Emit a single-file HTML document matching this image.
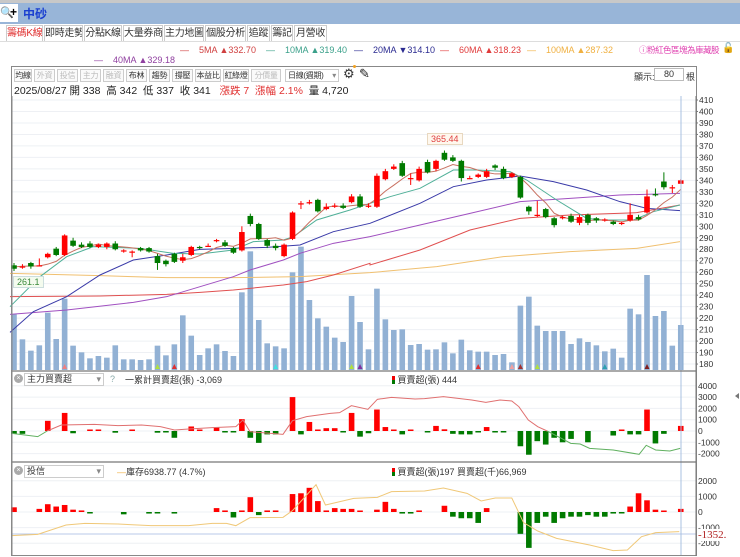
<!DOCTYPE html>
<html><head><meta charset="utf-8">
<style>
*{margin:0;padding:0;box-sizing:border-box}
body{width:740px;height:557px;overflow:hidden;background:#fff;font-family:"Liberation Sans","Noto Sans CJK TC",sans-serif;position:relative;font-size:11px;color:#333}
.abs{position:absolute;white-space:nowrap}
.tab{position:absolute;top:25px;height:16px;border:1px solid #ccc;border-bottom:none;font-size:10px;line-height:15px;text-align:center;color:#333;background:#fff;white-space:nowrap;overflow:hidden;letter-spacing:-0.3px}
.btn{position:absolute;top:69px;height:13px;border:1px solid #ccc;font-size:8px;line-height:11px;text-align:center;color:#333;background:#fafafa;white-space:nowrap;overflow:hidden;letter-spacing:-0.3px}
.btn.d{color:#bbb}
</style></head><body>
<div class="abs" style="left:0;top:0;width:740px;height:3px;background:#c8c8c8"></div>
<div class="abs" style="left:0;top:3px;width:740px;height:21px;background:#98b5d8"></div>
<div class="abs" style="left:0;top:4px;width:18px;height:18px;background:#fff;font-size:11px;line-height:18px">&#x1F50D;</div>
<div class="abs" style="left:10px;top:5px;font-size:12px;font-weight:bold;color:#000">+</div>
<div class="abs" style="left:23px;top:5px;font-size:12px;font-weight:bold;color:#1a3fd0">中砂</div>

<div class="tab" style="left:6px;width:37px;color:#e03030">籌碼K線</div>
<div class="tab" style="left:44px;width:39px">即時走勢</div>
<div class="tab" style="left:84px;width:38px">分點K線</div>
<div class="tab" style="left:123px;width:40px">大量券商</div>
<div class="tab" style="left:164px;width:40px">主力地圖</div>
<div class="tab" style="left:205px;width:41px">個股分析</div>
<div class="tab" style="left:247px;width:23px">追蹤</div>
<div class="tab" style="left:271px;width:22px">籌記</div>
<div class="tab" style="left:294px;width:33px">月營收</div>
<div class="abs" style="left:0;top:41px;width:740px;height:1px;background:#ddd"></div>

<div class="abs" style="top:45px;left:180px;font-size:9px;color:#d04040">—&nbsp;&nbsp;&nbsp;&nbsp;5MA ▲332.70</div>
<div class="abs" style="top:45px;left:266px;font-size:9px;color:#3aa08a">—&nbsp;&nbsp;&nbsp;&nbsp;10MA ▲319.40</div>
<div class="abs" style="top:45px;left:354px;font-size:9px;color:#2a2a90">—&nbsp;&nbsp;&nbsp;&nbsp;20MA ▼314.10</div>
<div class="abs" style="top:45px;left:440px;font-size:9px;color:#e03a3a">—&nbsp;&nbsp;&nbsp;&nbsp;60MA ▲318.23</div>
<div class="abs" style="top:45px;left:527px;font-size:9px;color:#f0b040">—&nbsp;&nbsp;&nbsp;&nbsp;100MA ▲287.32</div>
<div class="abs" style="top:44px;left:639px;font-size:8.5px;color:#e040b0;letter-spacing:-0.5px">ⓘ粉紅色區塊為庫藏股</div>
<div class="abs" style="top:43px;left:722px;font-size:10px;color:#000">🔓</div>
<div class="abs" style="top:55px;left:94px;font-size:9px;color:#9040a0">—&nbsp;&nbsp;&nbsp;&nbsp;40MA ▲329.18</div>

<div class="abs" style="left:11px;top:66px;width:686px;height:490px;border:1px solid #888"></div>
<div class="btn" style="left:14px;width:18px">均線</div>
<div class="btn d" style="left:34px;width:21px">外資</div>
<div class="btn d" style="left:57px;width:21px">投信</div>
<div class="btn d" style="left:80px;width:21px">主力</div>
<div class="btn d" style="left:103px;width:21px">融資</div>
<div class="btn" style="left:126px;width:21px">布林</div>
<div class="btn" style="left:149px;width:21px">趨勢</div>
<div class="btn" style="left:172px;width:21px">撐壓</div>
<div class="btn" style="left:195px;width:26px">本益比</div>
<div class="btn" style="left:223px;width:26px">紅綠燈</div>
<div class="btn d" style="left:251px;width:30px">分價量</div>
<div class="btn" style="left:285px;width:54px;text-align:left;padding-left:2px;background:#fff">日線(週期)<span style="float:right;padding-right:2px;color:#888">▾</span></div>
<div class="abs" style="left:343px;top:66px;font-size:13px;color:#333">⚙</div>
<div class="abs" style="left:353px;top:65px;width:3px;height:3px;border-radius:50%;background:#f0a020"></div>
<div class="abs" style="left:359px;top:66px;font-size:13px;color:#222">✎</div>
<div class="abs" style="left:634px;top:70px;font-size:9px;color:#333">顯示:</div>
<div class="abs" style="left:654px;top:68px;width:30px;height:13px;border:1px solid #bbb;font-size:9px;text-align:center;line-height:11px">80</div>
<div class="abs" style="left:686px;top:70px;font-size:9px;color:#333">根</div>
<div class="abs" style="left:14px;top:83px;font-size:10.5px;color:#222">2025/08/27 開 338&nbsp; 高 342&nbsp; 低 337&nbsp; 收 341&nbsp;&nbsp; <span style="color:#e03030">漲跌 7&nbsp; 漲幅 2.1%</span>&nbsp; 量 4,720</div>

<svg class="abs" style="left:0;top:0" width="740" height="557" id="sv">
<g id="grid" stroke="#eef0f4" stroke-width="1"></g>
<g id="vol"></g>
<g id="mas" fill="none"></g>
<g id="cdl"></g>
<g id="p1"></g>
<g id="p2"></g>
<g id="ax" font-size="8.5" fill="#333" font-family="Liberation Sans,sans-serif"></g>
<line x1="681" y1="96" x2="681" y2="555" stroke="#a8c0e0" stroke-width="1"/>
<line x1="696" y1="96" x2="696" y2="556" stroke="#777" stroke-width="1"/>
<line x1="12" y1="371" x2="696" y2="371" stroke="#777" stroke-width="1.2"/>
<line x1="12" y1="462" x2="696" y2="462" stroke="#777" stroke-width="1.2"/>
<line x1="12" y1="96" x2="12" y2="556" stroke="#888"/>
<path d="M735 396 l4 -3 v6z" fill="#777"/>
</svg>

<div class="abs" style="left:13px;top:276px;font-size:9px;color:#3a8a3a;background:#f4fbee;border:1px solid #cdd;padding:0 3px">261.1</div>
<div class="abs" style="left:427px;top:133px;font-size:9px;color:#e04040;background:#fff8ee;border:1px solid #e8d8c0;padding:0 3px">365.44</div>

<div class="abs" style="left:14px;top:374px;width:9px;height:9px;border-radius:50%;background:#aaa;color:#fff;font-size:7px;line-height:9px;text-align:center">×</div>
<div class="abs" style="left:24px;top:373px;width:80px;height:13px;border:1px solid #ccc;font-size:9px;line-height:11px;padding-left:2px">主力買賣超<span style="float:right;padding-right:2px;color:#888">▾</span></div>
<div class="abs" style="left:110px;top:374px;font-size:9px;color:#8aa">?</div>
<div class="abs" style="left:125px;top:373px;font-size:9px;color:#333">一累計買賣超(張) -3,069</div>
<div class="abs" style="left:392px;top:373px;font-size:9px;color:#333"><span style="display:inline-block;width:3px;height:8px;background:linear-gradient(#e00 50%,#070 50%);vertical-align:-1px"></span> 買賣超(張) 444</div>

<div class="abs" style="left:14px;top:466px;width:9px;height:9px;border-radius:50%;background:#aaa;color:#fff;font-size:7px;line-height:9px;text-align:center">×</div>
<div class="abs" style="left:24px;top:465px;width:80px;height:13px;border:1px solid #ccc;font-size:9px;line-height:11px;padding-left:2px">投信<span style="float:right;padding-right:2px;color:#888">▾</span></div>
<div class="abs" style="left:117px;top:465px;font-size:9px;color:#333"><span style="color:#f0b040">—</span>庫存6938.77 (4.7%)</div>
<div class="abs" style="left:392px;top:465px;font-size:9px;color:#333"><span style="display:inline-block;width:3px;height:8px;background:linear-gradient(#e00 50%,#070 50%);vertical-align:-1px"></span> 買賣超(張)197 買賣超(千)66,969</div>
<div class="abs" style="left:698px;top:529px;font-size:11px;color:#b02020;background:#fff;font-family:'Liberation Serif',serif">-1352.</div>

<script>
var NS="http://www.w3.org/2000/svg";
function el(p,t,a){var e=document.createElementNS(NS,t);for(var k in a)e.setAttribute(k,a[k]);document.getElementById(p).appendChild(e);return e;}
function X(i){return 14+8.44*i;}
function PY(p){return 100+(410-p)*1.148;}
for(var p=180;p<=410;p+=10){var y=PY(p);el('grid','line',{x1:12,x2:696,y1:y,y2:y});var t=el('ax','text',{x:699,y:y+3});t.textContent=p;el('ax','line',{x1:696,x2:698,y1:y,y2:y,stroke:'#777'});}
var C=[[266,263,268,261],[265,265,267,263],[268,265,269,263],[266,266,272,265],[273,276,277,272],[280.5,275,282,274],[275,292,293,274],[287.5,283,290,282],[284,282,286,281],[285,282,287,281],[282,284,285,281],[282,285,286,280],[285,280,287,279],[278,279,280,277],[278,278,279,273],[281,279,282,278],[281,278,282,277],[274,268,276,262],[270,267,271,265],[276,269,277,268],[270,273,276,268],[275,282,283,274],[282,281.5,283,280],[283,283,285,282],[288,288,289,286],[286,283,288,282],[281,277,282,276],[279,295,300,278],[309,302,311,300],[302,289,303,288],[288,283,289,281],[283,281,285,279],[274,284,285,273],[289,312,313,288],[320,320,322,315],[321,321,323,319],[323,313,324,312],[315,317,320,314],[318,318,320,316],[318,316,320,315],[321,326,328,320],[326,317,328,316],[318,318,320,316],[317,344,346,316],[341,348,350,340],[350,352,354,349],[355,344,357,343],[342,342,346,336],[340,350,352,339],[356,347,358,346],[350,357,358,348],[364,358,366,357],[360,357,362,356],[357,342,358,339],[342,342,344,341],[343,345,346,342],[343,348,350,342],[353,351,354,349],[350,342,352,341],[343,346,347,342],[343,325,344,324],[317,313,318,310],[309,310,322,308],[315,308,316,307],[307,301,308,299],[308,308,309,306],[309,304,311,303],[303,308,310,301],[310,303,311,301],[307,305,308,303],[306,306,307,304],[304,302,305,301],[302,303,304,301],[305,310,320,304],[308,306,310,305],[312,326,332,311],[328,327,333,326],[339,334,347,332],[334,334,336,329],[337,340,341,337]];
var V=[673,748,782,766,668,747,626,767,787,805,798,803,766,808,808,810,808,767,796,763,676,737,795,775,763,783,798,607,484,690,760,769,775,547,470,630,685,710,743,756,618,696,778,596,688,720,718,765,762,779,778,757,790,749,781,785,785,795,792,817,647,620,707,723,723,723,762,745,756,766,784,776,803,656,673,555,678,663,767,705];
for(var i=0;i<80;i++){var t=90+V[i]/3;el('vol','rect',{x:X(i)-2.8,y:t,width:5.6,height:370-t,fill:'#92b1d4'});}
[[6,'#f08080'],[17,'#b0e040'],[19,'#e03030'],[31,'#40e0e0'],[40,'#b0e040'],[41,'#8030a0'],[55,'#e03030'],[59,'#f0a0a0'],[60,'#a03030'],[62,'#b0e040'],[70,'#30a0b0'],[75,'#802020']].forEach(function(a){var x=X(a[0]);el('vol','path',{d:'M'+(x-2.5)+' 369 L'+x+' 364 L'+(x+2.5)+' 369z',fill:a[1]});});
function poly(g,pts,off,col,w,base){var s='';pts.forEach(function(q){s+=((q[0]+(off||0))/3)+','+(base+q[1]/3)+' ';});el(g,'polyline',{points:s,stroke:col,'stroke-width':w||1,fill:'none'});}
function join(a,b){return a.concat(b.map(function(q){return [q[0]+1110,q[1]];}));}
poly('mas',join([[30,550],[300,557],[500,563],[700,563],[900,560],[1110,548]],[[0,548],[200,530],[400,500],[600,485],[800,475],[930,455]]),0,'#f0c070',1,90);
poly('mas',join([[30,620],[300,618],[500,613],[600,607],[700,600],[850,585],[920,575],[1000,555],[1110,520]],[[0,525],[150,480],[300,420],[450,385],[600,375],[800,368],[930,345]]),0,'#e05050',1,90);
poly('mas',join([[30,673],[200,660],[400,637],[500,620],[600,590],[700,560],[750,540],[850,510],[900,490],[1000,460],[1110,440]],[[0,440],[150,405],[300,370],[450,335],[600,325],[750,315],[930,310]]),0,'#a050c0',1,90);
poly('mas',join([[30,727],[100,665],[200,620],[300,555],[400,510],[500,495],[600,478],[700,475],[800,472],[900,465],[1000,425],[1110,400]],[[0,400],[150,340],[250,290],[350,270],[450,258],[550,275],[650,300],[750,335],[830,355],[930,362]]),0,'#3a3aa8',1,90);
poly('mas',join([[30,650],[120,560],[200,500],[280,470],[420,475],[520,490],[600,492],[700,480],[760,455],[850,450],[880,440],[950,390],[1050,360],[1110,340]],[[0,340],[60,320],[150,295],[250,240],[320,240],[420,245],[470,270],[560,330],[650,385],[700,390],[790,390],[850,365],[930,345]]),0,'#50b098',1,90);
var s='';var pre=[262,264,266,268];for(var i=0;i<80;i++){var sum=0;for(var k=0;k<5;k++){var j=i-k;sum+= j>=0?C[j][1]:pre[j+4];}s+=X(i)+','+PY(sum/5)+' ';}
el('mas','polyline',{points:s,stroke:'#c87060','stroke-width':1,fill:'none'});
for(var i=0;i<80;i++){var c=C[i],x=X(i),up=c[1]>=c[0],col=up?'#ff0000':'#007a00';
el('cdl','line',{x1:x,x2:x,y1:PY(c[2]),y2:PY(c[3]),stroke:col,'stroke-width':1});
var t=PY(Math.max(c[0],c[1])),b=PY(Math.min(c[0],c[1]));if(b-t<1.2)b=t+1.2;
el('cdl','rect',{x:x-2.8,y:t,width:5.6,height:b-t,fill:col});}
var Z1=431,K1=11.3/1000;
for(var v=-2000;v<=4000;v+=1000){var y=Z1-v*K1;el('grid','line',{x1:12,x2:696,y1:y,y2:y});var t=el('ax','text',{x:698,y:y+3});t.textContent=v;}
var B1={0:-250,1:-250,4:900,6:1600,7:-200,9:40,10:40,12:-150,14:40,17:-150,18:-80,19:-600,21:400,22:60,24:300,25:-60,26:-100,27:1050,28:-600,29:-1050,30:-300,31:-300,33:3000,34:-300,35:800,36:60,37:250,38:250,39:-100,40:1600,41:-500,42:-200,43:1900,44:350,45:100,46:-300,47:50,49:-100,50:450,51:150,52:-250,53:-300,54:-300,55:-100,56:350,57:-50,58:-50,60:-1350,61:-2100,62:-900,63:-1200,64:-600,65:-1000,66:-700,68:-1000,71:-400,72:100,73:-300,74:-300,75:1900,76:-1100,77:-250,79:450};
for(var k in B1){var v=B1[k],x=X(+k),h=Math.max(Math.abs(v)*K1,1.5);el('p1','rect',{x:x-2.8,y:v>0?Z1-h:Z1,width:5.6,height:h,fill:v>0?'#ff0000':'#007a00'});}
function poly3(pts,col){var s='';pts.forEach(function(q){s+=(q[0]/2.12)+','+(360+q[1]/3)+' ';});el('p1','polyline',{points:s,stroke:col,'stroke-width':1,fill:'none'});}
poly3([[25,220],[80,230],[100,213]],'#60b060');
poly3([[100,213],[130,195],[200,193],[250,197],[300,195],[340,200],[370,210],[400,207],[450,203],[500,200],[515,180],[530,215],[600,223],[620,182],[650,170],[700,160],[720,158],[745,137],[780,148],[800,118],[830,112],[880,117],[900,116],[940,110],[1000,120],[1030,127],[1060,120],[1085,123],[1100,140],[1120,180],[1140,200],[1160,213]],'#e07070');
poly3([[1160,213],[1190,235],[1210,250],[1230,252],[1250,265],[1300,270],[1355,283],[1370,256],[1390,270],[1420,273],[1442,265]],'#60b060');
var Z2=512,K2=15.6/1000;
[2000,1000,0,-1000,-2000].forEach(function(v){var y=Z2-v*K2;el('grid','line',{x1:12,x2:696,y1:y,y2:y});var t=el('ax','text',{x:698,y:y+3});t.textContent=v;});
el('p2','line',{x1:12,x2:696,y1:534,y2:534,stroke:'#b8c8e8'});
var B2={0:300,3:200,4:500,5:350,6:450,7:150,8:100,9:-50,13:-150,16:-100,17:-50,19:-100,24:250,25:100,26:-350,27:100,28:950,29:-200,30:100,31:100,33:1150,34:1200,35:1550,36:700,37:100,38:250,39:200,40:200,41:50,43:150,44:650,45:200,46:-100,47:-100,48:100,51:400,52:-300,53:-400,54:-400,55:-700,56:250,60:-1400,61:-2300,62:-700,63:-300,64:-700,65:-400,66:-300,67:-300,68:-200,69:-300,70:-300,71:-100,72:-50,73:350,74:1200,75:750,76:150,77:50,79:200};
for(var k in B2){var v=B2[k],x=X(+k),h=Math.max(Math.abs(v)*K2,1.5);el('p2','rect',{x:x-2.8,y:v>0?Z2-h:Z2,width:5.6,height:h,fill:v>0?'#ff0000':'#007a00'});}
var s='';[[25,527],[80,523],[140,495],[180,490],[250,492],[320,497],[400,497],[450,490],[480,490],[500,497],[530,473],[600,472],[620,452],[670,374],[690,435],[750,415],[800,412],[830,395],[900,393],[940,384],[990,400],[1020,423],[1050,414],[1085,414],[1110,488],[1140,513],[1180,535],[1250,555],[1300,572],[1330,570],[1360,530],[1390,518],[1440,515]].forEach(function(q){s+=(q[0]/2.12)+','+(360+q[1]/3)+' ';});
el('p2','polyline',{points:s,stroke:'#f0c878','stroke-width':1,fill:'none'});
</script>
</body></html>
